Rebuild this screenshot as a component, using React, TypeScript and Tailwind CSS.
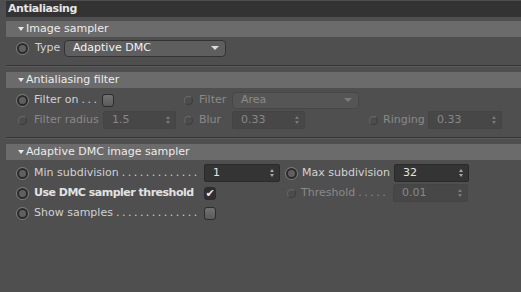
import React from 'react';

const font = { fontFamily: '"DejaVu Sans", "Liberation Sans", sans-serif' };

function Radio({ on = true }: { on?: boolean }) {
  if (!on) {
    return (
      <div className="flex h-[12px] w-[12px] shrink-0 items-center justify-center">
        <div className="h-[9px] w-[9px] rounded-full border border-[#3c3c3c] border-t-[#6a6a6a] border-l-[#666] bg-[#4c4c4c]" />
      </div>
    );
  }
  return (
    <div className="h-[13px] w-[13px] shrink-0 rounded-full bg-[#7c7c7c] p-[1px]">
      <div className="h-full w-full rounded-full border-2 border-[#2b2b2b] bg-[#606060]" />
    </div>
  );
}

function Check({ checked = false }: { checked?: boolean }) {
  return (
    <div
      className={
        'flex h-[13px] w-[12px] shrink-0 items-center justify-center rounded-[3px] border border-[#2c2c2c] ' +
        (checked ? 'bg-[#2f2f2f]' : 'bg-gradient-to-b from-[#727272] to-[#5a5a5a]')
      }
    >
      {checked && <span className="text-[11px] leading-none text-[#e8e8e8]">✔</span>}
    </div>
  );
}

function Spin({ dim }: { dim?: boolean }) {
  return (
    <div className="flex flex-col items-center gap-[2px]">
      <div
        className={
          'h-0 w-0 border-x-[2.5px] border-b-[3px] border-x-transparent ' +
          (dim ? 'border-b-[#7a7a7a]' : 'border-b-[#a8a8a8]')
        }
      />
      <div
        className={
          'h-0 w-0 border-x-[2.5px] border-t-[3px] border-x-transparent ' +
          (dim ? 'border-t-[#7a7a7a]' : 'border-t-[#a8a8a8]')
        }
      />
    </div>
  );
}

function Num({ value, w, dim }: { value: string; w: string; dim?: boolean }) {
  return (
    <div
      className={
        'flex h-[18px] shrink-0 items-center justify-between rounded-[2px] border pl-2 pr-[5px] ' +
        w +
        (dim
          ? ' border-[#444] bg-[#474747] text-[#888]'
          : ' border-[#2a2a2a] bg-[#343434] text-[#e4e4e4]')
      }
    >
      <span>{value}</span>
      <Spin dim={dim} />
    </div>
  );
}

function Select({ value, w, dim }: { value: string; w: string; dim?: boolean }) {
  return (
    <div
      className={
        'flex h-[17px] shrink-0 items-center justify-between rounded-[4px] border pl-2 pr-[6px] ' +
        w +
        (dim
          ? ' border-[#474747] bg-[#555555] text-[#8a8a8a]'
          : ' border-[#333] bg-[#5e5e5e] text-[#f2f2f2]')
      }
    >
      <span>{value}</span>
      <div
        className={
          'h-0 w-0 border-x-[4px] border-t-[4px] border-x-transparent ' +
          (dim ? 'border-t-[#7a7a7a]' : 'border-t-[#dcdcdc]')
        }
      />
    </div>
  );
}

function Header({ title }: { title: string }) {
  return (
    <div className="flex h-[16px] items-center bg-[#6b6b6b] pl-[12px] text-[#ececec]">
      <div className="mr-[2px] h-0 w-0 border-x-[3px] border-t-[4px] border-x-transparent border-t-[#e8e8e8]" />
      <span>{title}</span>
    </div>
  );
}

function Divider() {
  return <div className="mt-[7px] mb-[5px] h-[2px] border-t border-[#363636] border-b border-b-[#5a5a5a]" />;
}

function Label({
  text,
  dots = 0,
  dim,
  bold,
  w,
}: {
  text: string;
  dots?: number;
  dim?: boolean;
  bold?: boolean;
  w: string;
}) {
  return (
    <span
      className={
        'shrink-0 whitespace-nowrap ' +
        w +
        (dim ? ' text-[#8a8a8a]' : ' text-[#d2d2d2]') +
        (bold ? ' font-bold tracking-[-0.5px] text-[#e2e2e2]' : '')
      }
    >
      {text}
      {dots > 0 && <span className="tracking-[-0.5px]">{' .'.repeat(dots)}</span>}
    </span>
  );
}

export default function App() {
  return (
    <div style={font} className="h-[292px] w-[521px] overflow-hidden bg-[#4f4f4f] pt-[1px] pl-[6px] text-[11px]">
      <div className="flex h-[16px] items-center bg-[#333333] pl-[2px] text-[11px] font-bold tracking-[-0.4px] text-[#e6e6e6]">
        Antialiasing
      </div>

      <div className="mt-[4px]">
        <Header title="Image sampler" />
        <div className="mt-[1px] flex h-[20px] items-center pl-[10px]">
          <Radio />
          <span className="ml-[6px] w-[29px] text-[#d2d2d2]">Type</span>
          <Select value="Adaptive DMC" w="w-[162px]" />
        </div>
      </div>
      <Divider />

      <div>
        <Header title="Antialiasing filter" />
        <div className="mt-[2px] flex h-[20px] items-center pl-[10px]">
          <Radio />
          <Label text="Filter on" dots={3} w="ml-[5px] w-[68px]" />
          <Check />
          <div className="ml-[68px] flex items-center">
            <Radio on={false} />
            <Label text="Filter" dim w="ml-[5px] w-[33px]" />
            <Select value="Area" w="w-[127px]" dim />
          </div>
        </div>
        <div className="flex h-[20px] items-center pl-[10px]">
          <Radio on={false} />
          <Label text="Filter radius" dim w="ml-[6px] w-[69px]" />
          <Num value="1.5" w="w-[73px]" dim />
          <div className="ml-[6px] flex items-center">
            <Radio on={false} />
            <Label text="Blur" dim w="ml-[5px] w-[33px]" />
            <Num value="0.33" w="w-[73px]" dim />
          </div>
          <div className="ml-[62px] flex items-center">
            <Radio on={false} />
            <Label text="Ringing" dim w="ml-[4px] w-[45px]" />
            <Num value="0.33" w="w-[74px]" dim />
          </div>
        </div>
      </div>
      <Divider />

      <div>
        <Header title="Adaptive DMC image sampler" />
        <div className="mt-[3px] flex h-[20px] items-center pl-[10px]">
          <Radio />
          <Label text="Min subdivision" dots={13} w="ml-[5px] w-[170px]" />
          <Num value="1" w="w-[76px]" />
          <div className="ml-[5px] flex items-center">
            <Radio />
            <Label text="Max subdivision" w="ml-[4px] w-[92px]" />
            <Num value="32" w="w-[75px]" />
          </div>
        </div>
        <div className="flex h-[20px] items-center pl-[10px]">
          <Radio />
          <Label text="Use DMC sampler threshold" bold w="ml-[5px] w-[170px]" />
          <Check checked />
          <div className="ml-[69px] flex items-center">
            <Radio on={false} />
            <Label text="Threshold" dots={5} dim w="ml-[4px] w-[92px]" />
            <Num value="0.01" w="w-[75px]" dim />
          </div>
        </div>
        <div className="flex h-[20px] items-center pl-[10px]">
          <Radio />
          <Label text="Show samples" dots={14} w="ml-[5px] w-[170px]" />
          <Check />
        </div>
      </div>
    </div>
  );
}
